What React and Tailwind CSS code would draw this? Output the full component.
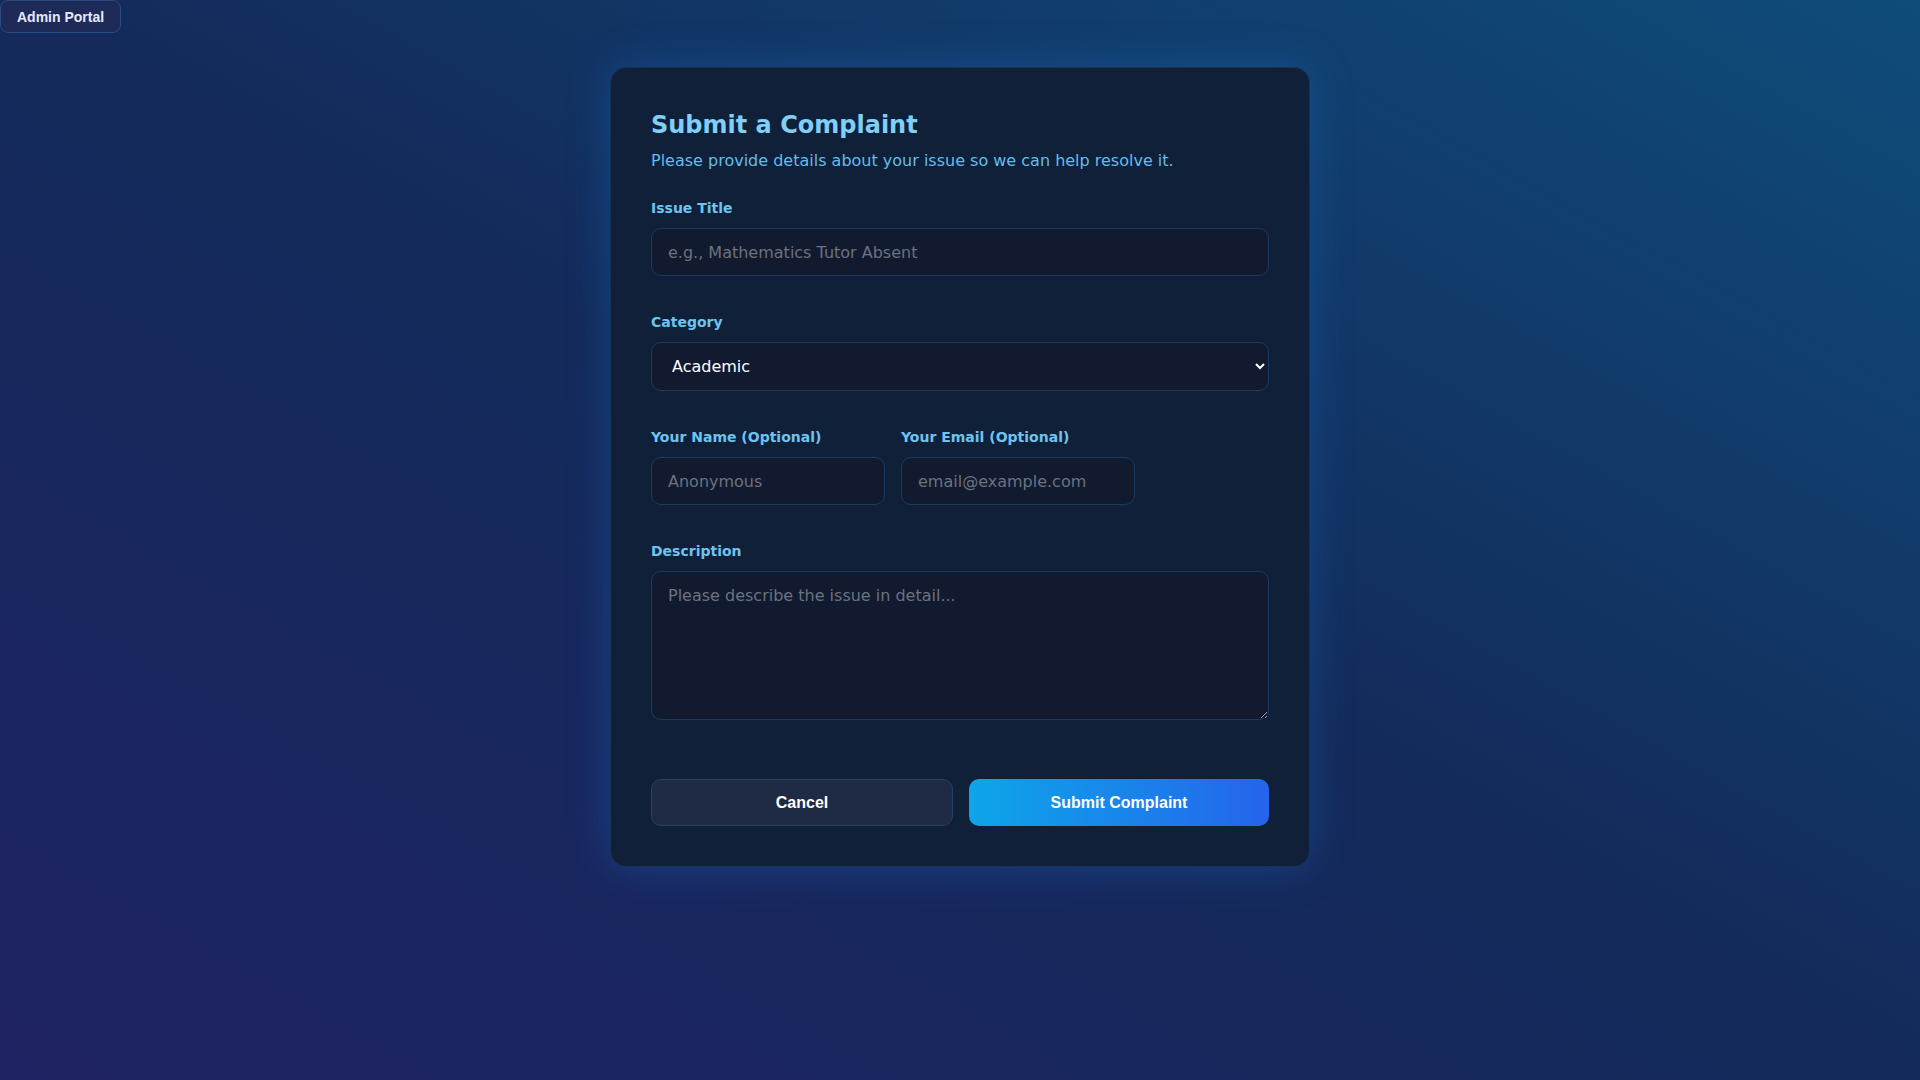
import { useState } from 'react';

const inputBase =
    'w-full rounded-[10px] border border-[#1d3a5e] bg-[#111a2f] px-4 text-base text-white placeholder:text-[#6b7280] outline-none';

export default function App() {
    const [category, setCategory] = useState('Academic');

    return (
        <div className="min-h-screen w-full bg-[linear-gradient(to_top_right,#1f2262_0%,#132a5a_50%,#0f4c7a_100%)] font-['DejaVu_Sans',sans-serif]">

            {/* Top link */}
            <div className="flex">
                <button className="h-[33px] px-4 rounded-lg border border-[#2a4a82] bg-[#1e2a58] text-sm font-bold text-[#e6eaf7] font-['Liberation_Sans',Arial,sans-serif]">
                    Admin Portal
                </button>
            </div>

            {/* Card */}
            <div className="flex justify-center pt-[34px] pb-10">
                <div className="w-[700px] rounded-2xl border border-[#173257] bg-[#112039] px-10 pt-[41px] pb-10 shadow-[0_0_44px_rgba(30,120,220,0.32)]">
                    <h1 className="text-2xl leading-8 font-bold text-[#7fcff6]">Submit a Complaint</h1>
                    <p className="mt-2 text-base leading-6 text-[#62bdea]">
                        Please provide details about your issue so we can help resolve it.
                    </p>

                    <form className="mt-[25px] flex flex-col" onSubmit={e => e.preventDefault()}>
                        <label className="mb-2.5 text-sm leading-5 font-bold text-[#6ec4ef]">Issue Title</label>
                        <input className={`${inputBase} h-12`} placeholder="e.g., Mathematics Tutor Absent" />

                        <label className="mt-9 mb-2.5 text-sm leading-5 font-bold text-[#6ec4ef]">Category</label>
                        <select
                            value={category}
                            onChange={e => setCategory(e.target.value)}
                            className={`${inputBase} h-[49px]`}
                        >
                            <option>Academic</option>
                            <option>Facilities</option>
                            <option>Administrative</option>
                            <option>Other</option>
                        </select>

                        <div className="mt-9 flex gap-4">
                            <div className="flex flex-col">
                                <label className="mb-2.5 text-sm leading-5 font-bold text-[#6ec4ef]">Your Name (Optional)</label>
                                <input className={`${inputBase} h-12 w-[233px]`} placeholder="Anonymous" />
                            </div>
                            <div className="flex flex-col">
                                <label className="mb-2.5 text-sm leading-5 font-bold text-[#6ec4ef]">Your Email (Optional)</label>
                                <input className={`${inputBase} h-12 w-[233px]`} placeholder="email@example.com" />
                            </div>
                        </div>

                        <label className="mt-9 mb-2.5 text-sm leading-5 font-bold text-[#6ec4ef]">Description</label>
                        <textarea
                            className={`${inputBase} h-[149px] py-3 leading-6`}
                            placeholder="Please describe the issue in detail..."
                        />

                        <div className="mt-[59px] flex gap-4 font-['Liberation_Sans',Arial,sans-serif]">
                            <button type="button" className="h-[47px] flex-1 rounded-[10px] border border-[#1f4266] bg-[#1f2a44] text-base font-bold text-white">
                                Cancel
                            </button>
                            <button type="submit" className="h-[47px] flex-1 rounded-[10px] bg-linear-to-r from-[#0ea5e9] to-[#2563eb] text-base font-bold text-white">
                                Submit Complaint
                            </button>
                        </div>
                    </form>
                </div>
            </div>
        </div>
    );
}
